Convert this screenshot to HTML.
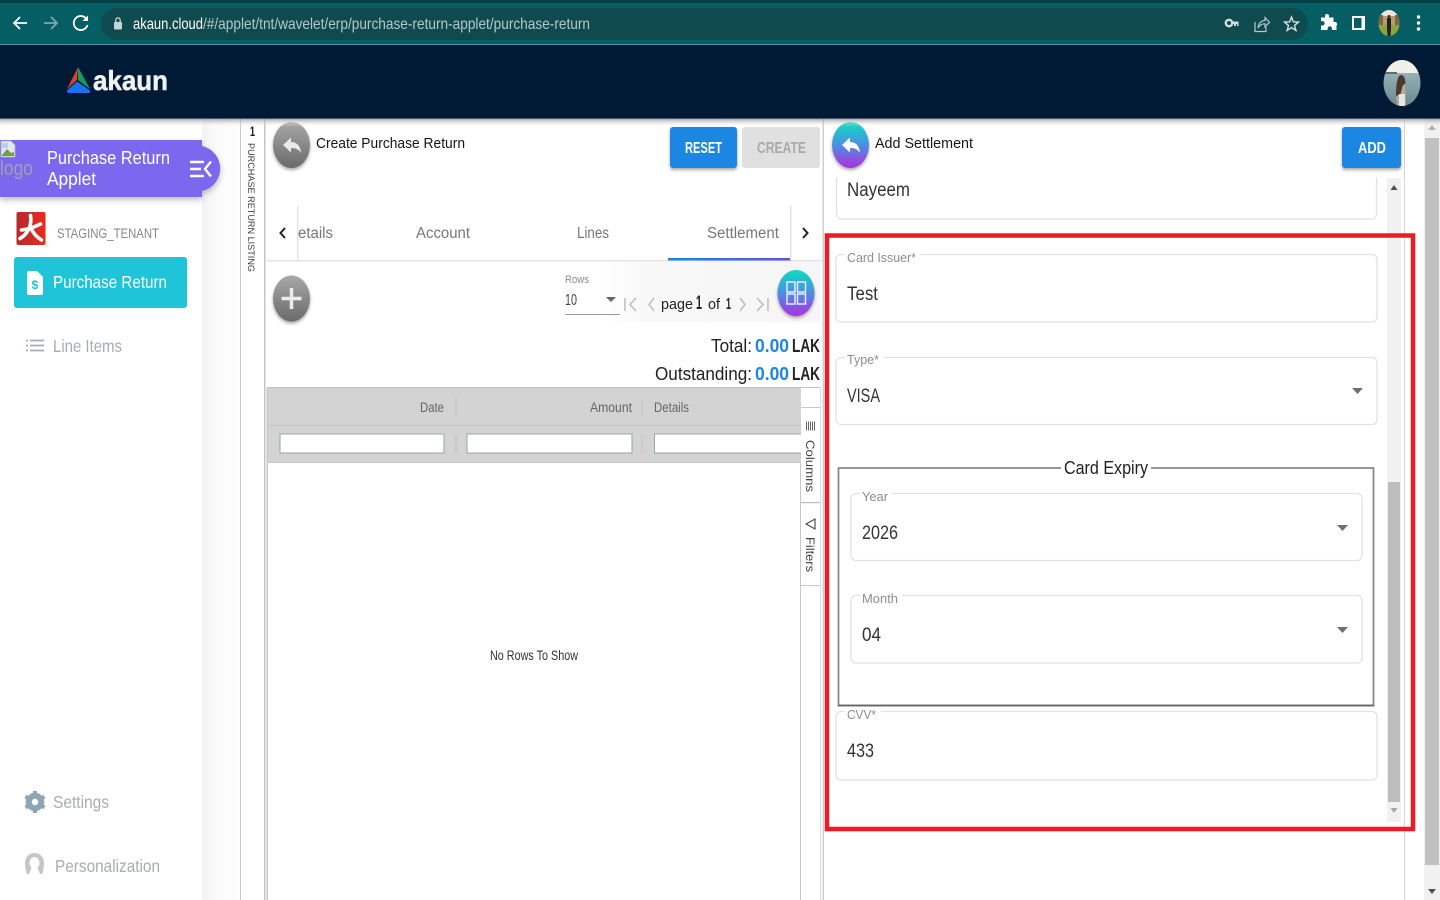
<!DOCTYPE html>
<html lang="en"><head><meta charset="utf-8"><title>Purchase Return</title>
<style>
html,body{margin:0;padding:0;width:1440px;height:900px;overflow:hidden;background:#fff}
svg{display:block}
text{font-family:"Liberation Sans",sans-serif}
</style></head><body>
<svg xmlns="http://www.w3.org/2000/svg" width="1440" height="900" viewBox="0 0 1440 900">
<defs>
<linearGradient id="g" x1="0" y1="0" x2="0" y2="1"><stop offset="0" stop-color="#a8a8a8"/><stop offset="1" stop-color="#6a6a6a"/></linearGradient>
<linearGradient id="c" x1="0" y1="0" x2="0" y2="1"><stop offset="0" stop-color="#0fdcc0"/><stop offset=".5" stop-color="#4a90e2"/><stop offset="1" stop-color="#b02ee0"/></linearGradient>
<linearGradient id="u" x1="0" y1="0" x2="1" y2="0"><stop offset="0" stop-color="#1c86e3"/><stop offset="1" stop-color="#5a55e0"/></linearGradient>
<linearGradient id="sh" x1="0" y1="0" x2="0" y2="1"><stop offset="0" stop-color="#999" stop-opacity=".8"/><stop offset="1" stop-color="#fff" stop-opacity="0"/></linearGradient>
<linearGradient id="sea" x1="0" y1="0" x2="0" y2="1"><stop offset="0" stop-color="#a9c0c4"/><stop offset="1" stop-color="#68898f"/></linearGradient>
<linearGradient id="ten" x1="0" y1="0" x2="1" y2="0"><stop offset="0" stop-color="#b52a2a"/><stop offset="1" stop-color="#ee2a1c"/></linearGradient>
<linearGradient id="sd" x1="0" y1="0" x2="1" y2="0"><stop offset="0" stop-color="#f2f2f2"/><stop offset=".4" stop-color="#fbfbfb"/><stop offset="1" stop-color="#fefefe"/></linearGradient>
<linearGradient id="tb" x1="0" y1="0" x2="1" y2="0"><stop offset="0" stop-color="#fff"/><stop offset=".2" stop-color="#f8f8f8"/><stop offset="1" stop-color="#f6f6f6"/></linearGradient>
<clipPath id="av1"><ellipse cx="1389" cy="23" rx="10.500" ry="13"/></clipPath>
<clipPath id="av2"><ellipse cx="1402" cy="83" rx="18.500" ry="23"/></clipPath>
<filter id="bs" x="-30%" y="-30%" width="160%" height="170%"><feDropShadow dx="0" dy="2" stdDeviation="1.600" flood-color="#000" flood-opacity=".35"/></filter>
<filter id="ps" x="-10%" y="-30%" width="120%" height="170%"><feDropShadow dx="0" dy="3" stdDeviation="3" flood-color="#000" flood-opacity=".25"/></filter>
</defs>

<!-- Chrome -->
<rect width="1440" height="45" fill="#045e63"/>
<rect width="1440" height="3" fill="#003f43"/>
<rect y="44" width="1440" height="1" fill="#4a9a9d"/>
<rect x="101" y="8" width="1207" height="32" rx="16" fill="#0f4a4f"/>
<path d="M27 23H15M20 17l-6 6 6 6" fill="none" stroke="#fff" stroke-width="1.800"/>
<path d="M44 23h12M51 17l6 6-6 6" fill="none" stroke="#7fa9ab" stroke-width="1.800"/>
<path d="M86.500 19A7 7 0 1 0 87.500 25" fill="none" stroke="#fff" stroke-width="1.800"/><path d="M88 15.500V21H82.500z" fill="#fff"/>
<rect x="114" y="22" width="8" height="7.500" rx="1" fill="#c5d5d6"/><path d="M115.800 22v-2a2.200 2.200 0 0 1 4.400 0v2" fill="none" stroke="#c5d5d6" stroke-width="1.300"/>
<text x="133" y="29" font-size="16" fill="#fff" textLength="70" lengthAdjust="spacingAndGlyphs">akaun.cloud</text>
<text x="203" y="29" font-size="16" fill="#b5c8c9" textLength="387" lengthAdjust="spacingAndGlyphs">/#/applet/tnt/wavelet/erp/purchase-return-applet/purchase-return</text>
<circle cx="1229" cy="23" r="3.200" fill="none" stroke="#d5dede" stroke-width="2.400"/><path d="M1232 21.500h6.500v4.500h-1.500v-2h-1v2H1234v-2h-2z" fill="#d5dede"/>
<path d="M1255 22v9.500h11V27M1258 28c.5-5 3.500-7.500 7-7.500V17.500l4.500 4.800-4.500 4.500v-3c-3 0-5.500 1.200-7 4.200z" fill="none" stroke="#b8c8c9" stroke-width="1.200"/>
<path d="M1291.500 17l1.800 4.800 5.200.3-4 3.300 1.400 5-4.400-2.800-4.400 2.800 1.400-5-4-3.300 5.200-.3z" fill="none" stroke="#d5dede" stroke-width="1.400"/>
<path d="M1322 20h4v-1.500a2 2 0 0 1 4 0V20h4.500v4.500H1336a2.200 2.200 0 0 1 0 4.400h1.500v3.600H1333v-1.500a2.200 2.200 0 0 0-4.400 0v1.500H1322v-4.500h1.500a2.200 2.200 0 0 0 0-4.400H1322z" fill="#fff" transform="translate(-1 -2.500)"/>
<path fill-rule="evenodd" d="M1352 16h13v14h-13zM1354 18v10h7.500v-10z" fill="#fff"/>
<g clip-path="url(#av1)">
<rect x="1378" y="10" width="22" height="26" fill="#b79a70"/>
<rect x="1378" y="10" width="22" height="6" fill="#e9e7df"/>
<path d="M1378 15h5v10h-5zM1395 15h5v10h-5z" fill="#7a6a40"/>
<rect x="1378" y="25" width="22" height="11" fill="#8ea33a"/>
<path d="M1387 18h4v9l-.5 9h-3l-.5-9z" fill="#1d2026"/><circle cx="1389" cy="16.500" r="1.500" fill="#3a2a22"/>
</g>
<circle cx="1418.500" cy="17" r="1.700" fill="#fff"/><circle cx="1418.500" cy="23" r="1.700" fill="#fff"/><circle cx="1418.500" cy="29" r="1.700" fill="#fff"/>

<!-- App bar -->
<rect y="45" width="1440" height="73" fill="#001a35"/>
<rect y="118" width="1440" height="1" fill="#49566a"/>
<path d="M78 67L67 89l10-9z" fill="#d9402f"/><path d="M78 67v13l12 9z" fill="#139e5b"/><path d="M77 81.500L67 90.500c0 1.500.5 2.500 2 2.500h19.500c1.500 0 2-1.500 1.500-2.500z" fill="#1a73e8"/>
<text x="93" y="90" font-size="28" font-weight="700" fill="#f1f1f1" stroke="#f1f1f1" stroke-width=".5" textLength="75" lengthAdjust="spacingAndGlyphs">akaun</text>
<g clip-path="url(#av2)">
<rect x="1383" y="60" width="38" height="46" fill="url(#sea)"/>
<rect x="1383" y="60" width="38" height="13" fill="#f0efe8"/>
<rect x="1383" y="72" width="14" height="2" fill="#5f6c6c"/>
<path d="M1397 106c-1-9-.5-16 .5-22 .5-5 1.500-9 3.500-9 3 0 3.500 4 4 9 .5 7 1 15 .5 22z" fill="#b9a89b"/>
<path d="M1396 96c0-10 1-21 5-21 3.500 0 4 4 4.500 8l-3 3-2 8z" fill="#4a3a30"/>
<rect x="1399" y="94" width="6" height="12" fill="#e4e6e8"/>
</g>

<!-- Structure -->
<rect x="202" y="119" width="38" height="781" fill="url(#sd)"/>
<rect x="240" y="119" width="1" height="781" fill="#c9c9c9"/>
<rect x="264" y="119" width="1.500" height="781" fill="#c4c4c4"/>
<rect x="822.500" y="119" width="1.500" height="781" fill="#cfcfcf"/>
<rect x="1404" y="119" width="1" height="781" fill="#d5d5d5"/>
<rect x="1424" y="119" width="16" height="781" fill="#f1f1f1"/>
<rect x="1425" y="138" width="14" height="727" fill="#c1c1c1"/>
<path d="M1432 125l4 5h-8z" fill="#b0b0b0"/><path d="M1428 889h8l-4 5z" fill="#505050"/>

<!-- Sidebar -->
<g filter="url(#ps)"><path d="M0 140H202V146A23 23 0 0 1 202 191V197H0z" fill="#7b68ee"/></g>
<path d="M1 141h10l4 4v12H1z" fill="#e3e8ee" stroke="#a8b0b8" stroke-width=".8"/><path d="M2 155l5-6 4 4 3-1v4H2z" fill="#6d9f48"/><path d="M2 143h6v5H2z" fill="#b4cdf0"/>
<text x="0" y="175" font-size="20" fill="#a09fb2" textLength="33" lengthAdjust="spacingAndGlyphs">logo</text>
<text x="47" y="164" font-size="18.500" fill="#fff" textLength="123" lengthAdjust="spacingAndGlyphs">Purchase Return</text>
<text x="47" y="185" font-size="18.500" fill="#fff" textLength="49" lengthAdjust="spacingAndGlyphs">Applet</text>
<path d="M190 162h14M190 169h11M190 176h14" stroke="#fff" stroke-width="2.400"/><path d="M211 161.500l-6 7.500 6 7.500" fill="none" stroke="#fff" stroke-width="2.400"/>
<rect x="16.500" y="212" width="29" height="33" rx="2" fill="url(#ten)"/>
<path d="M30.500 215.500c.8 5 .3 9-1.500 13-1.800 4-4.500 7.500-9 10M21.500 230c6-.5 12-2.500 19-6M31 228c2 5 5.500 9 10.500 12" fill="none" stroke="#fff" stroke-width="3.600" stroke-linecap="round"/>
<text x="57" y="238" font-size="13.500" fill="#888" textLength="102" lengthAdjust="spacingAndGlyphs">STAGING_TENANT</text>
<rect x="14" y="257" width="173" height="51" rx="3" fill="#20c4d8"/>
<path d="M27 273a2 2 0 0 1 2-2h8l6 6v16a2 2 0 0 1-2 2H29a2 2 0 0 1-2-2z" fill="#fff"/>
<text x="31.500" y="289" font-size="12" font-weight="700" fill="#20c4d8">$</text>
<text x="53" y="288" font-size="17.500" fill="#fff" textLength="114" lengthAdjust="spacingAndGlyphs">Purchase Return</text>
<path d="M30 340.500h14M30 345.500h14M30 350.500h14" stroke="#a4adb4" stroke-width="1.800"/><path d="M26 340.500h2M26 345.500h2M26 350.500h2" stroke="#a4adb4" stroke-width="1.800"/>
<text x="53" y="352" font-size="17.500" fill="#a6adb3" textLength="69" lengthAdjust="spacingAndGlyphs">Line Items</text>
<circle cx="35" cy="802" r="6.200" fill="none" stroke="#8fa5b3" stroke-width="6"/>
<path d="M35 791v5M35 808v5M25.500 796.500l4.300 2.500M40.200 805l4.300 2.500M25.500 807.500l4.300-2.500M40.200 799l4.300-2.500" stroke="#8fa5b3" stroke-width="4"/>
<text x="53" y="808" font-size="17.500" fill="#a6adb3" textLength="56" lengthAdjust="spacingAndGlyphs">Settings</text>
<path d="M25 863c0-6 4-10 9.500-10s9.500 4 9.500 10c0 5-1 9-2 11H27c-1-2-2-6-2-11z" fill="#c6c6c6"/>
<ellipse cx="34.500" cy="863" rx="5" ry="6" fill="#fff"/>
<path d="M32 867h5l3 7H29z" fill="#fff"/>
<text x="55" y="872" font-size="17.500" fill="#a6adb3" textLength="105" lengthAdjust="spacingAndGlyphs">Personalization</text>

<!-- Vertical tab -->
<text x="250" y="136" font-size="14" font-weight="700" fill="#111" textLength="5" lengthAdjust="spacingAndGlyphs">1</text>
<text transform="translate(248,143) rotate(90)" font-size="9.500" fill="#4a3a3a" textLength="129" lengthAdjust="spacingAndGlyphs">PURCHASE RETURN LISTING</text>

<!-- Middle panel head -->
<ellipse cx="291.500" cy="145" rx="18.500" ry="23" fill="url(#g)" filter="url(#bs)"/>
<path d="M283 145l8-7.500v4.500c6 0 9.500 4 10 11-2-3.500-5-5-10-5v4.500z" fill="#e9e9e9"/>
<text x="316" y="148" font-size="14.500" fill="#161616" textLength="149" lengthAdjust="spacingAndGlyphs">Create Purchase Return</text>
<rect x="670" y="127" width="67" height="41" rx="3" fill="#1c86e3" filter="url(#bs)"/>
<text x="685" y="153" font-size="16" font-weight="700" fill="#fff" textLength="37" lengthAdjust="spacingAndGlyphs">RESET</text>
<rect x="742" y="127" width="78" height="41" rx="3" fill="#e0e0e0"/>
<text x="757" y="153" font-size="16" font-weight="700" fill="#a9a9a9" textLength="49" lengthAdjust="spacingAndGlyphs">CREATE</text>

<!-- Tabs -->
<text x="298" y="238" font-size="15.500" fill="#777" textLength="35" lengthAdjust="spacingAndGlyphs">etails</text>
<text x="416" y="238" font-size="15.500" fill="#777" textLength="54" lengthAdjust="spacingAndGlyphs">Account</text>
<text x="577" y="238" font-size="15.500" fill="#777" textLength="32" lengthAdjust="spacingAndGlyphs">Lines</text>
<text x="707" y="238" font-size="15.500" fill="#777" textLength="72" lengthAdjust="spacingAndGlyphs">Settlement</text>
<rect x="267" y="260" width="555" height="1.500" fill="#e3e3e3"/>
<rect x="668" y="258" width="123" height="2.500" fill="url(#u)"/>
<rect x="297" y="206" width="1.500" height="54" fill="#e4e4e4"/>
<rect x="790" y="206" width="1.500" height="54" fill="#e4e4e4"/>
<path d="M285 228l-4.500 5 4.500 5" fill="none" stroke="#222" stroke-width="2"/>
<path d="M803 228l4.500 5-4.500 5" fill="none" stroke="#222" stroke-width="2"/>

<!-- Toolbar -->
<rect x="600" y="262" width="220" height="60" fill="url(#tb)"/>
<ellipse cx="291.500" cy="298.500" rx="18.500" ry="23" fill="url(#g)" filter="url(#bs)"/>
<path d="M291.500 288v21M281.500 298.500h20" stroke="#ececec" stroke-width="3.500"/>
<text x="565" y="283" font-size="11" fill="#8a8a8a" textLength="24" lengthAdjust="spacingAndGlyphs">Rows</text>
<text x="565" y="305" font-size="16" fill="#444" textLength="12" lengthAdjust="spacingAndGlyphs">10</text>
<path d="M606 297h10l-5 5z" fill="#666"/>
<rect x="565" y="314" width="55" height="1" fill="#9a9a9a"/>
<path d="M625 298v13M636 298l-6 6.500 6 6.500M654 298l-5 6.500 5 6.500M740 298l5 6.500-5 6.500M757 298l6 6.500-6 6.500M768 298v13" fill="none" stroke="#bdbdbd" stroke-width="1.500"/>
<text x="661" y="309" font-size="14.500" fill="#222" textLength="32" lengthAdjust="spacingAndGlyphs">page</text>
<text x="696" y="309" font-size="19" font-weight="700" fill="#222" textLength="6" lengthAdjust="spacingAndGlyphs">1</text>
<text x="708" y="309" font-size="14.500" fill="#222" textLength="12" lengthAdjust="spacingAndGlyphs">of</text>
<text x="726" y="309" font-size="15.500" font-weight="700" fill="#222" textLength="5" lengthAdjust="spacingAndGlyphs">1</text>
<ellipse cx="796" cy="293" rx="18.500" ry="23" fill="url(#c)" filter="url(#bs)"/>
<g fill="none" stroke="#e8e8ff" stroke-width="1.500"><rect x="787" y="282" width="8" height="10"/><rect x="797.500" y="282" width="8" height="10"/><rect x="787" y="294" width="8" height="10"/><rect x="797.500" y="294" width="8" height="10"/></g>
<text x="711" y="352" font-size="18.500" fill="#222" textLength="41" lengthAdjust="spacingAndGlyphs">Total:</text>
<text x="755" y="352" font-size="18.500" font-weight="700" fill="#1c86e3" textLength="34" lengthAdjust="spacingAndGlyphs">0.00</text>
<text x="792" y="352" font-size="18.500" font-weight="700" fill="#222" textLength="28" lengthAdjust="spacingAndGlyphs">LAK</text>
<text x="655" y="380" font-size="18.500" fill="#222" textLength="97" lengthAdjust="spacingAndGlyphs">Outstanding:</text>
<text x="755" y="380" font-size="18.500" font-weight="700" fill="#1c86e3" textLength="34" lengthAdjust="spacingAndGlyphs">0.00</text>
<text x="792" y="380" font-size="18.500" font-weight="700" fill="#222" textLength="28" lengthAdjust="spacingAndGlyphs">LAK</text>

<!-- Grid -->
<rect x="266.500" y="387" width="1.500" height="513" fill="#c8c8c8"/>
<rect x="800" y="387" width="1" height="513" fill="#c8c8c8"/>
<rect x="268" y="388" width="533" height="74" fill="#d3d3d3"/>
<rect x="268" y="387" width="553" height="1.200" fill="#c4c4c4"/>
<rect x="268" y="425" width="533" height="1" fill="#bdc3c7"/>
<rect x="268" y="462" width="533" height="1" fill="#c4c9cc"/>
<rect x="455.500" y="398" width="1" height="18" fill="#c2c2c2"/><rect x="641.500" y="398" width="1" height="18" fill="#c2c2c2"/>
<rect x="455.500" y="435" width="1" height="18" fill="#c2c2c2"/><rect x="641.500" y="435" width="1" height="18" fill="#c2c2c2"/>
<text x="420" y="412" font-size="13.500" fill="#666" textLength="24" lengthAdjust="spacingAndGlyphs">Date</text>
<text x="590" y="412" font-size="13.500" fill="#666" textLength="42" lengthAdjust="spacingAndGlyphs">Amount</text>
<text x="654" y="412" font-size="13.500" fill="#666" textLength="35" lengthAdjust="spacingAndGlyphs">Details</text>
<rect x="280" y="434" width="164" height="19" fill="#fff" stroke="#95a5a6"/>
<rect x="467" y="434" width="165" height="19" fill="#fff" stroke="#95a5a6"/>
<rect x="654.500" y="434" width="150" height="19" fill="#fff" stroke="#95a5a6"/>
<rect x="801" y="388" width="20" height="512" fill="#fff"/>
<rect x="801" y="407" width="19" height="1" fill="#c8c8c8"/><rect x="801" y="502" width="19" height="1.200" fill="#bdbdbd"/><rect x="801" y="585" width="19" height="1" fill="#c8c8c8"/>
<rect x="820" y="387" width="1" height="513" fill="#dcdcdc"/>
<path d="M806.500 421.500v9M808.500 421.500v9M810.500 421.500v9M812.500 421.500v9M814.500 421.500v9" stroke="#666" stroke-width="1"/>
<text transform="translate(806,440) rotate(90)" font-size="12" fill="#444" textLength="52" lengthAdjust="spacingAndGlyphs">Columns</text>
<path d="M815 519v10l-9-5z" fill="none" stroke="#444" stroke-width="1.100"/>
<text transform="translate(806,537) rotate(90)" font-size="12" fill="#444" textLength="35" lengthAdjust="spacingAndGlyphs">Filters</text>
<text x="490" y="660" font-size="13.500" fill="#333" textLength="88" lengthAdjust="spacingAndGlyphs">No Rows To Show</text>

<!-- Right panel head -->
<ellipse cx="850.500" cy="145" rx="18.500" ry="23" fill="url(#c)" filter="url(#bs)"/>
<path d="M842 145l8-7.500v4.500c6 0 9.500 4 10 11-2-3.500-5-5-10-5v4.500z" fill="#fff"/>
<text x="875" y="148" font-size="14.500" fill="#161616" textLength="98" lengthAdjust="spacingAndGlyphs">Add Settlement</text>
<rect x="1342" y="127" width="59" height="41" rx="3" fill="#1c86e3" filter="url(#bs)"/>
<text x="1358" y="153" font-size="16" font-weight="700" fill="#fff" textLength="28" lengthAdjust="spacingAndGlyphs">ADD</text>

<!-- Inner scrollbar -->
<rect x="1387" y="178" width="14" height="644" fill="#f1f1f1"/>
<rect x="1388" y="482" width="12" height="320" fill="#bdbdbd"/>
<path d="M1394 185l3.500 5h-7z" fill="#505050"/><path d="M1390.500 808h7l-3.500 5z" fill="#a8a8a8"/>

<!-- Fields -->
<g fill="none" stroke="#e2e2e2" stroke-width="1.300">
<path d="M836.500 178v36a5 5 0 0 0 5 5h530a5 5 0 0 0 5-5v-36"/>
<path d="M845 254.500h-4a5 5 0 0 0-5 5v57.500a5 5 0 0 0 5 5h531a5 5 0 0 0 5-5v-57.500a5 5 0 0 0-5-5H921"/>
<path d="M845 357.500h-4a5 5 0 0 0-5 5v57a5 5 0 0 0 5 5h531a5 5 0 0 0 5-5v-57a5 5 0 0 0-5-5H884"/>
<path d="M860 493.500h-4a5 5 0 0 0-5 5v57a5 5 0 0 0 5 5h501a5 5 0 0 0 5-5v-57a5 5 0 0 0-5-5H892"/>
<path d="M860 595.500h-4a5 5 0 0 0-5 5v57.500a5 5 0 0 0 5 5h501a5 5 0 0 0 5-5v-57.500a5 5 0 0 0-5-5H902"/>
<path d="M845 711.500h-4a5 5 0 0 0-5 5v58.500a5 5 0 0 0 5 5h531a5 5 0 0 0 5-5v-58.500a5 5 0 0 0-5-5H881"/>
</g>
<text x="847" y="196" font-size="19" fill="#333" textLength="63" lengthAdjust="spacingAndGlyphs">Nayeem</text>
<text x="847" y="262" font-size="13" fill="#8d8d8d" textLength="69" lengthAdjust="spacingAndGlyphs">Card Issuer*</text>
<text x="847" y="300" font-size="19" fill="#333" textLength="31" lengthAdjust="spacingAndGlyphs">Test</text>
<text x="847" y="364" font-size="13" fill="#8d8d8d" textLength="32" lengthAdjust="spacingAndGlyphs">Type*</text>
<text x="847" y="402" font-size="19" fill="#333" textLength="33" lengthAdjust="spacingAndGlyphs">VISA</text>
<path d="M1352 388h11l-5.500 6z" fill="#707070"/>

<!-- Fieldset -->
<path d="M1061 468H838.500V705.500H1373.500V468H1151" fill="none" stroke="#8a8a8a" stroke-width="1.800"/>
<path d="M838 705.500H1374" stroke="#666" stroke-width="1.800"/>
<text x="1064" y="474" font-size="18" fill="#222" textLength="84" lengthAdjust="spacingAndGlyphs">Card Expiry</text>
<text x="862" y="501" font-size="13" fill="#8d8d8d" textLength="26" lengthAdjust="spacingAndGlyphs">Year</text>
<text x="862" y="539" font-size="19" fill="#333" textLength="36" lengthAdjust="spacingAndGlyphs">2026</text>
<path d="M1337 525h11l-5.500 6z" fill="#707070"/>
<text x="862" y="603" font-size="13" fill="#8d8d8d" textLength="36" lengthAdjust="spacingAndGlyphs">Month</text>
<text x="862" y="641" font-size="19" fill="#333" textLength="19" lengthAdjust="spacingAndGlyphs">04</text>
<path d="M1337 627h11l-5.500 6z" fill="#707070"/>
<text x="847" y="719" font-size="13" fill="#8d8d8d" textLength="29" lengthAdjust="spacingAndGlyphs">CVV*</text>
<text x="847" y="757" font-size="19" fill="#333" textLength="27" lengthAdjust="spacingAndGlyphs">433</text>

<!-- Top shadow -->
<rect y="119" width="1440" height="8" fill="url(#sh)"/>

<!-- Red highlight -->
<rect x="827" y="235.500" width="586" height="593.500" fill="none" stroke="#ed1c24" stroke-width="4.500"/>
</svg>
</body></html>
